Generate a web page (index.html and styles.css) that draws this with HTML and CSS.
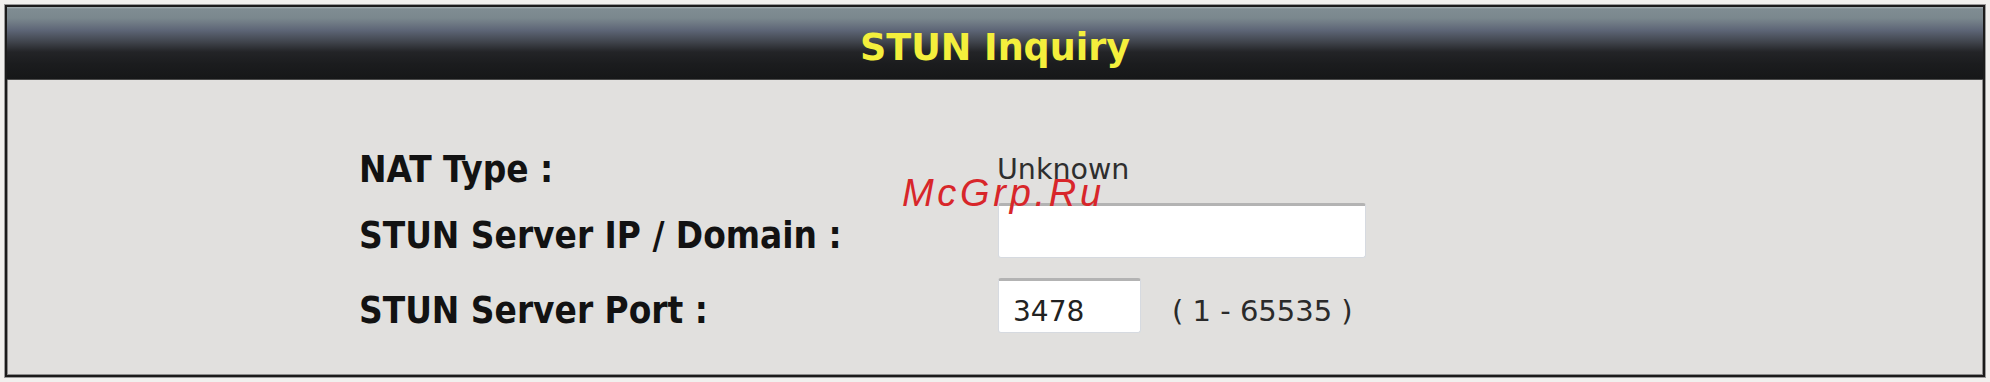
FILE: index.html
```html
<!DOCTYPE html>
<html lang="en">
<head>
<meta charset="utf-8">
<title>STUN Inquiry</title>
<link rel="stylesheet" href="styles.css">
</head>
<body>
<div class="panel">
  <div class="panel-head">STUN Inquiry</div>
  <div class="panel-body">
    <div class="row row-nat">
      <div class="label">NAT Type :</div>
      <div class="value">Unknown</div>
    </div>
    <div class="row row-ip">
      <div class="label label-low">STUN Server IP / Domain :</div>
      <div class="value"><input class="field field-wide" type="text" value=""></div>
    </div>
    <div class="row row-port">
      <div class="label label-low">STUN Server Port :</div>
      <div class="value"><input class="field field-port" type="text" value="3478"><span class="range">( 1 - 65535 )</span></div>
    </div>
  </div>
</div>
<div class="watermark">McGrp.Ru</div>
</body>
</html>
```
FILE: styles.css
```css
html, body {
  margin: 0;
  padding: 0;
}
body {
  background: #f1f0ee;
  width: 1990px;
  height: 382px;
  overflow: hidden;
  position: relative;
  font-family: "DejaVu Sans", Verdana, sans-serif;
}
.panel {
  margin: 5px 0 0 5px;
  width: 1976px;
  height: 368px;
  border: 2px solid #1b1b1b;
  box-shadow: 0 0 0 1px #9a9a9a, inset 0 0 0 1px #8c8c8c;
  background: #e1e0de;
  display: flex;
  flex-direction: column;
}
.panel-head {
  box-sizing: border-box;
  height: 73px;
  padding-top: 10px;
  border-bottom: 1px solid #4a4a4a;
  background: linear-gradient(to bottom,
    #a7b1b4 0px, #7f8c92 2px, #7b888e 11px, #5e6677 23px,
    #40444c 35px, #232427 45px, #1b1c1e 57px, #161718 100%);
  color: #f4ef3c;
  font-family: "DejaVu Sans", Verdana, sans-serif;
  font-weight: bold;
  font-size: 36.5px;
  line-height: 62px;
  text-align: center;
}
.panel-body {
  flex: 1;
  padding: 69px 0 0 352px;
}
.row {
  display: flex;
  align-items: center;
}
.row-nat { height: 40px; }
.row-ip { height: 55px; margin-top: 14px; }
.row-port { height: 55px; margin-top: 20px; }
.label {
  width: 638px;
  font-family: "DejaVu Sans Condensed", "DejaVu Sans", sans-serif;
  font-stretch: condensed;
  font-weight: bold;
  font-size: 36.6px;
  color: #121212;
  white-space: nowrap;
}
.label-low {
  padding-top: 10px;
}
.value {
  display: flex;
  align-items: center;
  font-family: "DejaVu Sans", sans-serif;
  font-size: 28.5px;
  color: #2e2e2e;
}
.field {
  box-sizing: border-box;
  height: 55px;
  margin: 0 0 0 1px;
  padding: 10px 0 0 14px;
  border: 1px solid #d6dae0;
  border-top: 3px solid #b3b3b3;
  border-radius: 3px;
  background: #ffffff;
  font-family: "DejaVu Sans", sans-serif;
  font-size: 28px;
  color: #222222;
  outline: none;
}
.field-wide { width: 368px; }
.field-port { width: 143px; }
.range {
  margin-left: 31px;
  padding-top: 10px;
  font-size: 29px;
  color: #2a2a2a;
}
.watermark {
  position: absolute;
  left: 902px;
  top: 174px;
  font-family: "Liberation Sans", Arial, sans-serif;
  font-style: italic;
  font-size: 38px;
  line-height: 38px;
  letter-spacing: 3.7px;
  color: #d8262a;
}
```
